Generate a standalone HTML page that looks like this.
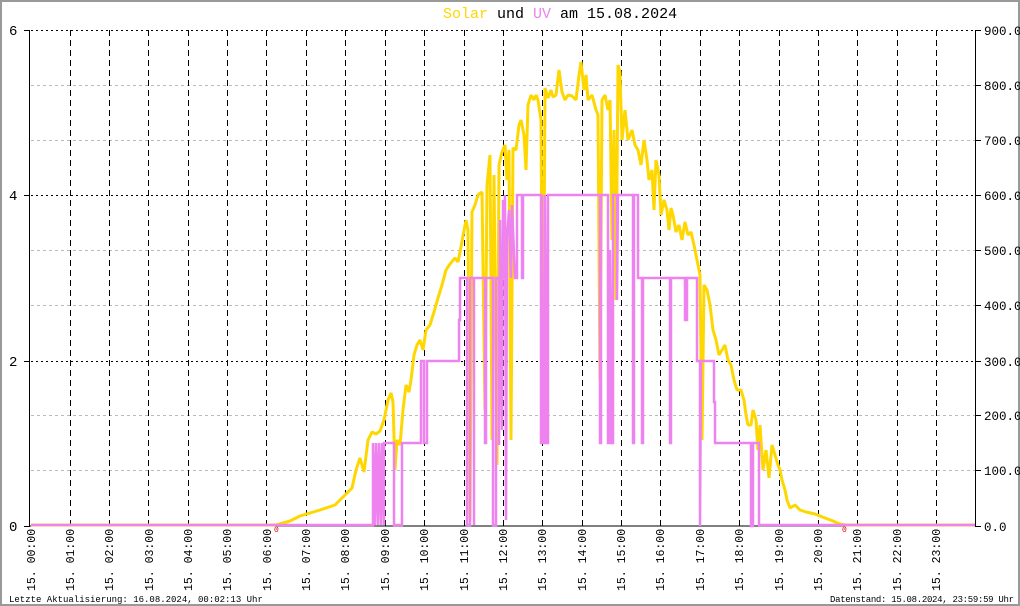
<!DOCTYPE html>
<html><head><meta charset="utf-8"><style>
html,body{margin:0;padding:0;background:#fff}
svg{display:block}
text{font-family:"Liberation Mono","DejaVu Sans Mono",monospace}
</style></head><body>
<svg width="1020" height="606" viewBox="0 0 1020 606" xmlns="http://www.w3.org/2000/svg">
<rect x="1" y="1" width="1018" height="604" fill="#fff" stroke="#999" stroke-width="2"/>
<text x="443" y="18" font-size="15" fill="#000"><tspan fill="#ffd700">Solar</tspan> und <tspan fill="#ee82ee">UV</tspan> am 15.08.2024</text>
<g stroke="#bbb" stroke-width="1" stroke-dasharray="3,3">
<path d="M31,85.5H975M31,140.5H975M31,250.5H975M31,305.5H975M31,415.5H975M31,470.5H975"/>
</g>
<g stroke="#000" stroke-width="1" stroke-dasharray="2,3">
<path d="M31,30.5H975M31,195.5H975M31,361.5H975"/>
</g>
<g stroke="#000" stroke-width="1" stroke-dasharray="6,4">
<path d="M70.5,30V526M109.5,30V526M148.5,30V526M188.5,30V526M227.5,30V526M266.5,30V526M306.5,30V526M345.5,30V526M385.5,30V526M424.5,30V526M464.5,30V526M503.5,30V526M542.5,30V526M582.5,30V526M621.5,30V526M660.5,30V526M700.5,30V526M739.5,30V526M779.5,30V526M818.5,30V526M857.5,30V526M897.5,30V526M936.5,30V526"/>
</g>
<path d="M29.5,30V526H975.5V30" fill="none" stroke="#000" stroke-width="1"/>
<g stroke="#000"><path d="M24,30.5H30M24,195.5H30M24,361.5H30M24,526.5H30M975,30.5H981M975,85.5H981M975,140.5H981M975,195.5H981M975,250.5H981M975,305.5H981M975,361.5H981M975,415.5H981M975,470.5H981M975,526.5H981"/></g>
<g font-size="14" fill="#000">
<text x="9" y="35">6</text><text x="9" y="200">4</text><text x="9" y="366">2</text><text x="9" y="531">0</text>
</g>
<g font-size="12.5" fill="#000">
<text x="984" y="35">900.0</text><text x="984" y="90">800.0</text><text x="984" y="145">700.0</text><text x="984" y="200">600.0</text><text x="984" y="255">500.0</text><text x="984" y="310">400.0</text><text x="984" y="366">300.0</text><text x="984" y="420">200.0</text><text x="984" y="475">100.0</text><text x="984" y="531">0.0</text>
</g>
<!-- Solar -->
<polyline fill="none" stroke="#ffd700" stroke-width="3" stroke-linejoin="bevel" points="31,525 276,525 290,521 300,516 310,513 320,510 335,505 345,495 352,488 356,470 360,458 364,472 368,440 372,432 376,434 380,431 384,420 388,400 391,393 393,402 395,470 397,440 400,445 403,410 406,385 409,392 411,380 414,355 417,345 420,340 423,350 426,330 430,325 434,312 438,298 442,285 446,270 450,264 455,258 458,262 460,252 463,236 466,220 468,230 470,520 472,212 475,205 478,195 482,192 485,410 487,185 490,155 492,440 494,175 497,465 499,165 502,152 505,145 507,180 509,150 511,440 513,148 516,150 519,125 521,120 524,135 526,170 528,105 531,95 534,100 536,95 538,100 541,120 543,430 545,88 548,98 551,90 553,97 556,95 559,70 562,92 565,100 568,95 572,96 576,100 579,75 581,62 584,90 586,75 588,100 592,95 596,110 598,115 600,380 602,100 605,95 608,110 610,100 612,240 614,130 616,300 618,65 620,72 622,140 625,110 628,140 632,130 635,145 638,150 641,165 644,140 647,160 649,180 652,170 654,210 656,160 659,175 661,215 664,200 667,210 669,230 671,208 673,215 676,232 679,225 682,240 685,222 688,235 691,232 694,245 697,260 700,275 702,440 704,285 707,290 710,305 713,330 716,340 719,355 722,350 725,345 728,360 731,365 734,380 737,390 741,390 744,400 746,415 748,425 751,425 753,410 756,420 758,450 760,425 763,470 766,450 769,478 772,445 775,455 778,465 780,470 782,480 785,490 787,500 790,508 795,505 800,510 806,512 815,514 825,518 833,521 840,524 845,525 975,525"/>
<!-- UV -->
<polyline fill="none" stroke="#ee82ee" stroke-width="2.5" stroke-linejoin="miter" points="31,525 373,525 373,443 375,525 376,443 378,525 379,443 381,525 382,443 384,525 384,443 394,443 394,525 402,525 402,443 421,443 421,361 424,361 424,443 427,443 427,361 459,361 459,320 460,320 460,278 467,278 467,525 470,525 470,278 474,278 474,525 474,278 485,278 485,443 486,443 486,278 493,278 493,525 496,525 496,278 499,278 499,445 500,220 502,430 503,200 504,278 505,195 506,520 507,237 509,210 511,278 512,205 515,278 517,278 517,195 522,195 522,278 523,278 523,195 541,195 541,443 542,443 542,195 543,443 545,443 545,195 547,443 548,443 548,195 600,195 600,443 601,443 601,195 608,195 608,443 610,443 610,250 612,443 613,443 613,195 617,195 617,300 618,195 633,195 633,443 634,443 634,195 638,195 638,278 642,278 642,443 643,443 643,278 670,278 670,443 671,443 671,278 685,278 685,320 687,320 687,278 697,278 697,361 700,361 700,526 701,361 714,361 714,402 715,402 715,443 751,443 751,526 753,526 753,443 759,443 759,525 975,525"/>
<g fill="#c00" font-size="8"><text x="274" y="532">0</text><text x="842" y="532">0</text></g>
<g font-size="11.5" fill="#000">
<text transform="translate(35,591) rotate(-90)">15. 00:00</text>
<text transform="translate(74,591) rotate(-90)">15. 01:00</text>
<text transform="translate(113,591) rotate(-90)">15. 02:00</text>
<text transform="translate(153,591) rotate(-90)">15. 03:00</text>
<text transform="translate(192,591) rotate(-90)">15. 04:00</text>
<text transform="translate(231,591) rotate(-90)">15. 05:00</text>
<text transform="translate(271,591) rotate(-90)">15. 06:00</text>
<text transform="translate(310,591) rotate(-90)">15. 07:00</text>
<text transform="translate(349,591) rotate(-90)">15. 08:00</text>
<text transform="translate(389,591) rotate(-90)">15. 09:00</text>
<text transform="translate(428,591) rotate(-90)">15. 10:00</text>
<text transform="translate(468,591) rotate(-90)">15. 11:00</text>
<text transform="translate(507,591) rotate(-90)">15. 12:00</text>
<text transform="translate(546,591) rotate(-90)">15. 13:00</text>
<text transform="translate(586,591) rotate(-90)">15. 14:00</text>
<text transform="translate(625,591) rotate(-90)">15. 15:00</text>
<text transform="translate(664,591) rotate(-90)">15. 16:00</text>
<text transform="translate(704,591) rotate(-90)">15. 17:00</text>
<text transform="translate(743,591) rotate(-90)">15. 18:00</text>
<text transform="translate(783,591) rotate(-90)">15. 19:00</text>
<text transform="translate(822,591) rotate(-90)">15. 20:00</text>
<text transform="translate(861,591) rotate(-90)">15. 21:00</text>
<text transform="translate(901,591) rotate(-90)">15. 22:00</text>
<text transform="translate(940,591) rotate(-90)">15. 23:00</text>
</g>
<g font-size="9" fill="#000">
<text x="9" y="602">Letzte Aktualisierung: 16.08.2024, 00:02:13 Uhr</text>
<text x="830" y="602" textLength="184">Datenstand: 15.08.2024, 23:59:59 Uhr</text>
</g>
</svg>
</body></html>
